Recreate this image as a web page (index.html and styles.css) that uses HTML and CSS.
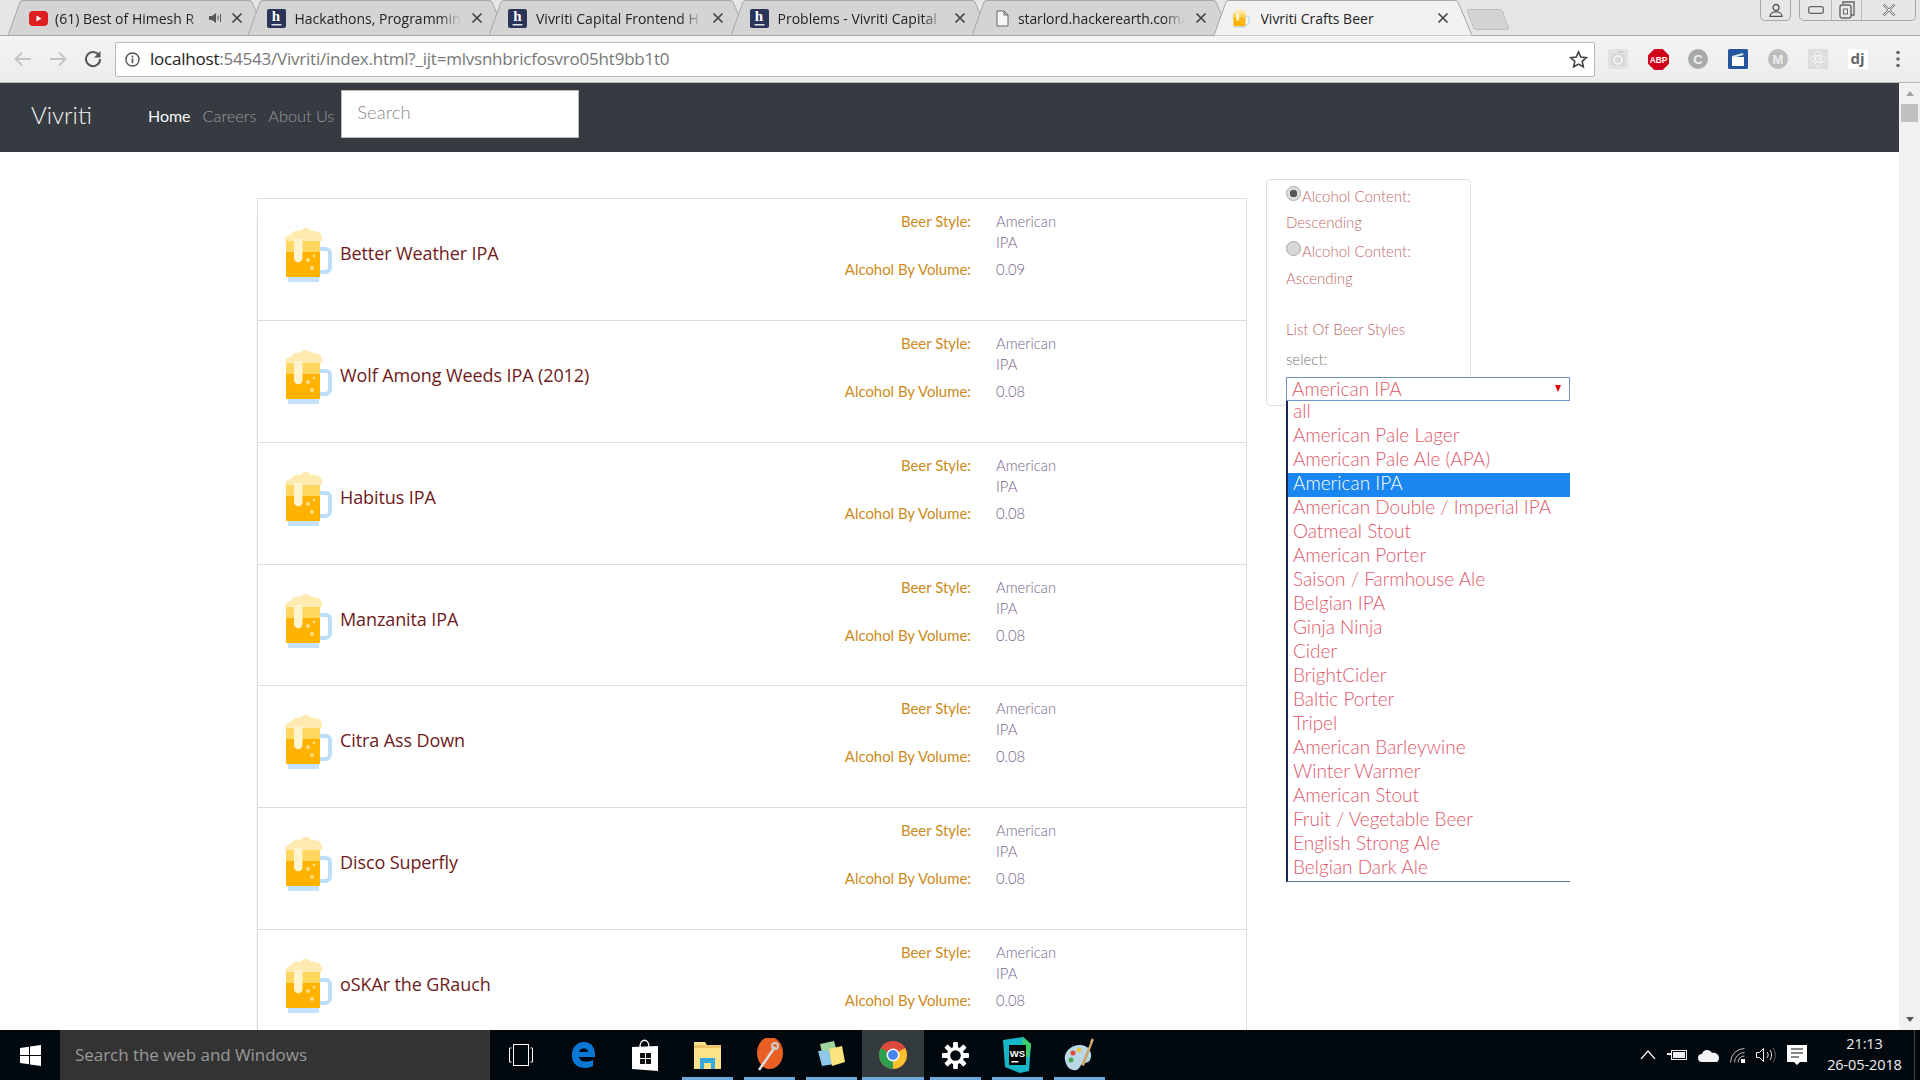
FILE: index.html
```html
<!DOCTYPE html>
<html lang="en">
<head>
<meta charset="utf-8">
<title>Vivriti Crafts Beer</title>
<link rel="stylesheet" href="styles.css">
</head>
<body>
<svg class="defs" width="0" height="0">
  <symbol id="beer" viewBox="0 0 48 54">
    <path d="M35 19h6a6 6 0 0 1 6 6v14a7 7 0 0 1-7 7h-5v-4h5a3 3 0 0 0 3-3V25a2 2 0 0 0-2-2h-6z" fill="#bbdefb"/>
    <rect x="3" y="48" width="31" height="6" fill="#c4e2fb"/>
    <rect x="1" y="13" width="34" height="36" fill="#ffb300"/>
    <rect x="1" y="13" width="34" height="11" fill="#ffd75e"/>
    <path d="M0 13c0-4 3-6 6-6 1-4 6-5 9-4 3-4 9-4 11 0 5-1 11 2 11 6v4H0z" fill="#ffeab0"/>
    <path d="M9 11h8.500v19a4.250 4.250 0 0 1-8.500 0z" fill="#fff3d0"/>
    <circle cx="23" cy="32" r="2" fill="#ffe08a"/><circle cx="29" cy="28" r="1.400" fill="#ffe08a"/><circle cx="27" cy="40" r="2" fill="#ffe08a"/>
  </symbol>
  <symbol id="tabshape" viewBox="0 0 258 36" preserveAspectRatio="none">
    <path d="M0 35.500 12 2q.6-1.500 3-1.500h226q2.400 0 3 1.500L258 35.500" vector-effect="non-scaling-stroke"/>
  </symbol>
  <symbol id="hfav" viewBox="0 0 19 19">
    <rect width="19" height="19" rx="2" fill="#2a3358"/>
    <path d="M4.500 15.800h10" stroke="#fff" stroke-width="1.300"/>
  </symbol>
</svg>

<header class="tabstrip">
  <div class="tabs">
    <div class="tab tab-first">
      <svg class="tab-bg"><use href="#tabshape"/></svg>
      <svg class="fav" viewBox="0 0 19 19"><rect y="2" width="19" height="15" rx="4" fill="#e02020"/><path d="M7.500 6.500l5 3-5 3z" fill="#fff"/></svg>
      <span class="tab-title tab-title-short">(61) Best of Himesh R</span>
      <svg class="speaker" viewBox="0 0 14 12"><path d="M0 4h3l4-3v10L3 8H0z" fill="#555"/><path d="M9 3.500v5M11.500 2v8" stroke="#555"/></svg>
      <svg class="close" viewBox="0 0 12 12"><path d="M1.500 1.500l9 9m0-9l-9 9" stroke="#444" stroke-width="1.700"/></svg>
    </div>
    <div class="tab">
      <svg class="tab-bg"><use href="#tabshape"/></svg>
      <span class="hbox"><svg class="hbox-bg"><use href="#hfav"/></svg><span class="hletter">h</span></span>
      <span class="tab-title">Hackathons, Programmin</span>
      <svg class="close" viewBox="0 0 12 12"><path d="M1.500 1.500l9 9m0-9l-9 9" stroke="#444" stroke-width="1.700"/></svg>
    </div>
    <div class="tab">
      <svg class="tab-bg"><use href="#tabshape"/></svg>
      <span class="hbox"><svg class="hbox-bg"><use href="#hfav"/></svg><span class="hletter">h</span></span>
      <span class="tab-title">Vivriti Capital Frontend H</span>
      <svg class="close" viewBox="0 0 12 12"><path d="M1.500 1.500l9 9m0-9l-9 9" stroke="#444" stroke-width="1.700"/></svg>
    </div>
    <div class="tab">
      <svg class="tab-bg"><use href="#tabshape"/></svg>
      <span class="hbox"><svg class="hbox-bg"><use href="#hfav"/></svg><span class="hletter">h</span></span>
      <span class="tab-title">Problems - Vivriti Capital</span>
      <svg class="close" viewBox="0 0 12 12"><path d="M1.500 1.500l9 9m0-9l-9 9" stroke="#444" stroke-width="1.700"/></svg>
    </div>
    <div class="tab">
      <svg class="tab-bg"><use href="#tabshape"/></svg>
      <svg class="fav fav-file" viewBox="0 0 13 17"><path d="M1 1h7l4 4v11H1zM8 1v4h4" fill="#f6f6f6" stroke="#666"/></svg>
      <span class="tab-title tab-title-file">starlord.hackerearth.com/</span>
      <svg class="close" viewBox="0 0 12 12"><path d="M1.500 1.500l9 9m0-9l-9 9" stroke="#444" stroke-width="1.700"/></svg>
    </div>
    <div class="tab tab-active">
      <svg class="tab-bg"><use href="#tabshape"/></svg>
      <svg class="fav fav-beer"><use href="#beer"/></svg>
      <span class="tab-title tab-title-active">Vivriti Crafts Beer</span>
      <svg class="close" viewBox="0 0 12 12"><path d="M1.500 1.500l9 9m0-9l-9 9" stroke="#444" stroke-width="1.700"/></svg>
    </div>
  </div>
  <div class="newtab"></div>
  <div class="winbtns">
    <div class="userbtn">
      <svg viewBox="0 0 14 14" width="14" height="14"><circle cx="7" cy="4.500" r="3" fill="none" stroke="#555" stroke-width="1.300"/><path d="M1 13.300c0-6 12-6 12 0z" fill="none" stroke="#555" stroke-width="1.300"/></svg>
    </div>
    <div class="wingroup">
      <div class="winbtn"><svg viewBox="0 0 16 8" width="16" height="8"><rect x=".7" y=".7" width="14.600" height="6.600" rx="2" fill="none" stroke="#666" stroke-width="1.300"/></svg></div>
      <div class="winbtn winbtn-mid"><svg viewBox="0 0 16 18" width="16" height="18"><path d="M4 3V1h11v13h-3" fill="none" stroke="#666" stroke-width="1.400"/><rect x="1" y="4" width="11" height="13" rx="2" fill="#e8e8e8" stroke="#666" stroke-width="1.400"/><rect x="4.500" y="8" width="4" height="5" fill="none" stroke="#666"/></svg></div>
      <div class="winbtn winbtn-x"><svg viewBox="0 0 14 14" width="14" height="14"><path d="M1.500 1.500l11 11m0-11l-11 11" stroke="#777" stroke-width="2.400"/><path d="M1.500 1.500l11 11m0-11l-11 11" stroke="#eee" stroke-width="1"/></svg></div>
    </div>
  </div>
</header>

<div class="toolbar">
  <div class="navarrows">
    <svg viewBox="0 0 18 16" width="18" height="16"><path d="M17 8H2m6-6.500L1.500 8 8 14.500" fill="none" stroke="#c4c4c4" stroke-width="1.800"/></svg>
    <svg viewBox="0 0 18 16" width="18" height="16"><path d="M1 8h15m-6-6.500L16.500 8 10 14.500" fill="none" stroke="#c4c4c4" stroke-width="1.800"/></svg>
    <svg viewBox="0 0 18 18" width="18" height="18"><path d="M15 5.500A7 7 0 1 0 16 9" fill="none" stroke="#555" stroke-width="2"/><path d="M16.500 1v6.500H10z" fill="#555"/></svg>
  </div>
  <div class="omnibox">
    <svg class="infoicon" viewBox="0 0 16 16" width="15" height="15"><circle cx="8" cy="8" r="7" fill="none" stroke="#555" stroke-width="1.500"/><path d="M8 7v5M8 4v1.800" stroke="#555" stroke-width="1.800"/></svg>
    <span class="url"><span class="url-host">localhost</span>:54543/Vivriti/index.html?_ijt=mlvsnhbricfosvro05ht9bb1t0</span>
    <svg class="star" viewBox="0 0 20 20" width="19" height="19"><path d="M10 2l2.400 5.400 5.800.6-4.300 3.900 1.200 5.800L10 14.800 4.900 17.700l1.200-5.800L1.800 8l5.800-.6z" fill="none" stroke="#444" stroke-width="1.700"/></svg>
  </div>
  <div class="extensions">
    <span class="ext"><svg viewBox="0 0 20 20" width="20" height="20"><rect width="20" height="20" rx="1" fill="#e2e2e2"/><rect x="3" y="5" width="14" height="12" fill="#d8d8d8"/><circle cx="10" cy="11" r="4" fill="none" stroke="#fafafa" stroke-width="1.500"/><rect x="10" y="2" width="5" height="2" fill="#cfcfcf"/></svg></span>
    <span class="ext"><svg viewBox="0 0 20 20" width="21" height="21"><path d="M6 0h8l6 6v8l-6 6H6l-6-6V6z" fill="#d0021b"/><text x="10" y="13.500" class="abp">ABP</text></svg></span>
    <span class="ext"><svg viewBox="0 0 20 20" width="20" height="20"><circle cx="10" cy="10" r="10" fill="#a9a9a9"/><text x="10" y="14.500" class="extletter">C</text></svg></span>
    <span class="ext"><svg viewBox="0 0 20 20" width="20" height="20"><rect width="20" height="20" rx="1.500" fill="#24579e"/><rect x="4" y="8" width="12" height="9" fill="#fff"/><path d="M4 7l11-3 .5 2-11 3z" fill="#dfe8f5"/></svg></span>
    <span class="ext"><svg viewBox="0 0 20 20" width="20" height="20"><circle cx="10" cy="10" r="10" fill="#bdbdbd"/><text x="10" y="14.500" class="extletter">M</text></svg></span>
    <span class="ext"><svg viewBox="0 0 20 20" width="20" height="20"><rect width="20" height="20" fill="#dedede"/><g fill="none" stroke="#f4f4f4"><ellipse cx="10" cy="10" rx="8" ry="3.500"/><ellipse cx="10" cy="10" rx="3.500" ry="8"/><circle cx="10" cy="10" r="2.500"/></g></svg></span>
    <span class="ext"><svg viewBox="0 0 20 20" width="20" height="20"><rect width="20" height="20" fill="#fff"/><text x="9.500" y="15" class="djtext">dj</text></svg></span>
    <span class="ext"><svg viewBox="0 0 4 18" width="4" height="18"><circle cx="2" cy="2.500" r="1.800" fill="#666"/><circle cx="2" cy="9" r="1.800" fill="#666"/><circle cx="2" cy="15.500" r="1.800" fill="#666"/></svg></span>
  </div>
</div>

<div class="viewport">
  <div class="page">
    <nav class="navbar">
      <a class="brand">Vivriti</a>
      <a class="navlink navlink-active">Home</a>
      <a class="navlink">Careers</a>
      <a class="navlink">About Us</a>
      <div class="searchbox">Search</div>
    </nav>
    <main class="content">
      <section class="beerlist">
        <article class="card">
          <svg class="mug"><use href="#beer"/></svg>
          <h2 class="beername">Better Weather IPA</h2>
          <dl class="facts">
            <dt>Beer Style:</dt><dd>American IPA</dd>
            <dt>Alcohol By Volume:</dt><dd>0.09</dd>
          </dl>
        </article>
        <article class="card">
          <svg class="mug"><use href="#beer"/></svg>
          <h2 class="beername">Wolf Among Weeds IPA (2012)</h2>
          <dl class="facts">
            <dt>Beer Style:</dt><dd>American IPA</dd>
            <dt>Alcohol By Volume:</dt><dd>0.08</dd>
          </dl>
        </article>
        <article class="card">
          <svg class="mug"><use href="#beer"/></svg>
          <h2 class="beername">Habitus IPA</h2>
          <dl class="facts">
            <dt>Beer Style:</dt><dd>American IPA</dd>
            <dt>Alcohol By Volume:</dt><dd>0.08</dd>
          </dl>
        </article>
        <article class="card">
          <svg class="mug"><use href="#beer"/></svg>
          <h2 class="beername">Manzanita IPA</h2>
          <dl class="facts">
            <dt>Beer Style:</dt><dd>American IPA</dd>
            <dt>Alcohol By Volume:</dt><dd>0.08</dd>
          </dl>
        </article>
        <article class="card">
          <svg class="mug"><use href="#beer"/></svg>
          <h2 class="beername">Citra Ass Down</h2>
          <dl class="facts">
            <dt>Beer Style:</dt><dd>American IPA</dd>
            <dt>Alcohol By Volume:</dt><dd>0.08</dd>
          </dl>
        </article>
        <article class="card">
          <svg class="mug"><use href="#beer"/></svg>
          <h2 class="beername">Disco Superfly</h2>
          <dl class="facts">
            <dt>Beer Style:</dt><dd>American IPA</dd>
            <dt>Alcohol By Volume:</dt><dd>0.08</dd>
          </dl>
        </article>
        <article class="card">
          <svg class="mug"><use href="#beer"/></svg>
          <h2 class="beername">oSKAr the GRauch</h2>
          <dl class="facts">
            <dt>Beer Style:</dt><dd>American IPA</dd>
            <dt>Alcohol By Volume:</dt><dd>0.08</dd>
          </dl>
        </article>
      </section>
      <aside class="filters">
        <div class="filterline"><input class="radio" type="radio" name="sort" checked>Alcohol Content:</div>
        <div class="filterline">Descending</div>
        <div class="filterline filterline-gap"><input class="radio" type="radio" name="sort">Alcohol Content:</div>
        <div class="filterline">Ascending</div>
        <div class="filterlabel">List Of Beer Styles</div>
        <div class="selectlabel">select:</div>
        <div class="selectwrap">
          <div class="selectbox"><span>American IPA</span><span class="selectarrow"></span></div>
          <ul class="dropdown">
            <li>all</li>
            <li>American Pale Lager</li>
            <li>American Pale Ale (APA)</li>
            <li class="selected">American IPA</li>
            <li>American Double / Imperial IPA</li>
            <li>Oatmeal Stout</li>
            <li>American Porter</li>
            <li>Saison / Farmhouse Ale</li>
            <li>Belgian IPA</li>
            <li>Ginja Ninja</li>
            <li>Cider</li>
            <li>BrightCider</li>
            <li>Baltic Porter</li>
            <li>Tripel</li>
            <li>American Barleywine</li>
            <li>Winter Warmer</li>
            <li>American Stout</li>
            <li>Fruit / Vegetable Beer</li>
            <li>English Strong Ale</li>
            <li>Belgian Dark Ale</li>
          </ul>
        </div>
      </aside>
    </main>
  </div>
  <div class="scrollbar">
    <span class="arrow-up"></span>
    <span class="thumb"></span>
    <span class="arrow-down"></span>
  </div>
</div>

<footer class="taskbar">
  <div class="startbtn">
    <svg viewBox="0 0 21 21" width="21" height="21"><path d="M0 3l9-1.300V10H0zM10 1.500L21 0v10H10zM0 11h9v8.300L0 18zM10 11h11v10l-11-1.500z" fill="#fff"/></svg>
  </div>
  <div class="winsearch">Search the web and Windows</div>
  <div class="taskicon taskicon-view">
    <svg viewBox="0 0 24 22" width="24" height="22"><rect x="4.500" y=".5" width="15" height="21" fill="none" stroke="#fff"/><path d="M2.500 4H.5v14h2M21.500 4h2v14h-2" fill="none" stroke="#fff"/></svg>
  </div>
  <div class="taskicon">
    <svg viewBox="0 0 26 28" width="26" height="28"><path d="M2 16C1 7 7 0 15 1c7 .8 10 6 10 13v2H9c.5 5 8 6 14 3v6c-8 4-20 2-21-9zM9 11h9c0-5-8-5-9 0z" fill="#0a78d4"/></svg>
  </div>
  <div class="taskicon">
    <svg viewBox="0 0 26 32" width="26" height="32"><path d="M8 8c0-9 9-9 9 0" fill="none" stroke="#fff" stroke-width="1.300"/><path d="M0 8l26-1v25L0 30z" fill="#fff"/><path d="M8 14h5v5H8zM14 14h5v5h-5zM8 20h5v5H8zM14 20h5v5h-5z" fill="#111"/></svg>
  </div>
  <div class="taskicon taskicon-on">
    <svg viewBox="0 0 27 28" width="27" height="28"><path d="M0 1h11l2 3h14v24H0z" fill="#fce38a"/><path d="M0 4h27v3H0z" fill="#e9c46a"/><path d="M6 17h15v11H6z" fill="#38a9de"/><path d="M10 22h7v6h-7z" fill="#fce38a"/></svg>
  </div>
  <div class="taskicon taskicon-on">
    <svg viewBox="0 0 28 34" width="28" height="34"><ellipse cx="15" cy="15" rx="13" ry="16" fill="#ea5f24"/><path d="M4 32l16-23" stroke="#ddd" stroke-width="2.500"/><circle cx="20" cy="8" r="3" fill="none" stroke="#ccc" stroke-width="2"/></svg>
  </div>
  <div class="taskicon taskicon-on">
    <svg viewBox="0 0 28 28" width="28" height="28"><path d="M3 3l14-3 4 14-14 6z" fill="#9fd69b"/><path d="M1 10l13-1 3 14-12 2z" fill="#8fc7e8"/><path d="M12 8l13-3 3 16-13 4z" fill="#fde37c"/></svg>
  </div>
  <div class="taskicon taskicon-on taskicon-active">
    <svg viewBox="0 0 28 28" width="28" height="28"><circle cx="14" cy="14" r="14" fill="#dd4b3e"/><path d="M14 14L26.100 7A14 14 0 0 1 14 28z" fill="#fbc02d"/><path d="M14 14L14 28A14 14 0 0 1 1.900 7z" fill="#2e9e4f"/><circle cx="14" cy="14" r="6.500" fill="#fff"/><circle cx="14" cy="14" r="5" fill="#4a84ee"/></svg>
  </div>
  <div class="taskicon taskicon-on">
    <svg viewBox="0 0 28 28" width="27" height="27"><g fill="#fff"><circle cx="14" cy="14" r="9"/><rect x="11.500" y="0" width="5" height="28" rx="1"/><rect x="0" y="11.500" width="28" height="5" rx="1"/><rect x="11.500" y="0" width="5" height="28" rx="1" transform="rotate(45 14 14)"/><rect x="11.500" y="0" width="5" height="28" rx="1" transform="rotate(-45 14 14)"/></g><circle cx="14" cy="14" r="5.500" fill="#02090e"/></svg>
  </div>
  <div class="taskicon taskicon-on">
    <svg viewBox="0 0 30 36" width="30" height="36"><path d="M1 3l20-3 8 7-2 27-9 2-15-6z" fill="#17b5c8"/><path d="M21 0l8 7-2 14-8-4z" fill="#3bd06a"/><rect x="7" y="8" width="17" height="20" fill="#000"/><text x="15.500" y="20" class="wstext">WS</text><rect x="9.500" y="24" width="7" height="1.500" fill="#fff"/></svg>
  </div>
  <div class="taskicon taskicon-on">
    <svg viewBox="0 0 30 34" width="30" height="34"><path d="M1 22c-2-9 8-16 16-15 9 1 12 9 9 15-2 4-7 2-9 5-2 4-4 6-8 5-5-1-7-5-8-10z" fill="#b9d8e8"/><circle cx="9" cy="15" r="2.500" fill="#e04a3a"/><circle cx="15" cy="12" r="2.300" fill="#f2c230"/><circle cx="7" cy="22" r="2.500" fill="#49a64e"/><path d="M17 27L27 3l2 1-9 24z" fill="#c9a36a"/><path d="M26 4l2-4 2 2-2 3z" fill="#e0b070"/></svg>
  </div>
  <div class="tray">
    <svg viewBox="0 0 16 10" width="16" height="10"><path d="M1 9l7-8 7 8" fill="none" stroke="#eee" stroke-width="1.300"/></svg>
    <svg viewBox="0 0 20 12" width="20" height="12"><rect x="4.500" y="1.500" width="15" height="9" fill="none" stroke="#eee"/><rect x="6" y="3" width="12" height="6" fill="#eee"/><path d="M0 5h4" stroke="#eee" stroke-width="2"/></svg>
    <svg viewBox="0 0 21 13" width="21" height="13"><path d="M4 13a4 4 0 0 1 0-8c1-4 7-6 10-1 4-1 7 2 7 5 0 2-1 4-3 4z" fill="#f4f4f4"/></svg>
    <svg viewBox="0 0 15 15" width="15" height="15"><path d="M.5 14.500a14 14 0 0 1 14-14M4.500 14.500a10 10 0 0 1 10-10M8 14.500a6.500 6.500 0 0 1 6.500-6.500" fill="none" stroke="#bbb"/><rect x="11" y="11" width="4" height="4" fill="#fff"/></svg>
    <svg viewBox="0 0 20 16" width="20" height="16"><path d="M.5 5.500h3l4-4v13l-4-4h-3z" fill="none" stroke="#eee"/><path d="M11 5c1.500 2 1.500 4 0 6M14 3c2 3 2 7 0 10" fill="none" stroke="#eee"/><path d="M17 1c3 4 3 10 0 14" fill="none" stroke="#666"/></svg>
    <svg viewBox="0 0 20 20" width="20" height="20"><path d="M0 0h20v17h-7l-3 3-3-3H0z" fill="#fff"/><path d="M4 4h12M4 8h12M4 12h8" stroke="#111" stroke-width="1.200"/></svg>
    <div class="clock"><div>21:13</div><div>26-05-2018</div></div>
  </div>
</footer>
</body>
</html>
```

FILE: styles.css
```css
* { box-sizing: border-box; }
html, body { margin: 0; height: 100%; }
body {
  width: 1920px;
  height: 1080px;
  overflow: hidden;
  display: flex;
  flex-direction: column;
  font-family: Lato, "Liberation Sans", sans-serif;
  background: #fff;
}
.defs { position: absolute; }

/* tab strip */
.tabstrip {
  height: 35px;
  flex: none;
  display: flex;
  background: #e6e6e6;
  position: relative;
}
.tabs { display: flex; padding-left: 8px; flex: none; }
.tab {
  position: relative;
  flex: none;
  width: 258px;
  height: 36px;
  margin-right: -16.500px;
  padding: 0 23px 0 19px;
  display: flex;
  align-items: center;
  font-family: "Open Sans", sans-serif;
  font-size: 14px;
  color: #222;
}
.tab-first { margin-right: -18.500px; padding-left: 21px; }
.tab-active { z-index: 2; }
.tab-bg { position: absolute; inset: 0; width: 100%; height: 100%; fill: #d4d4d4; stroke: #a8a8a8; stroke-width: 1; }
.tab-active .tab-bg { fill: #f2f2f2; }
.fav { width: 19px; height: 19px; flex: none; position: relative; }
.fav-file { width: 13px; height: 17px; margin: 0 9px 0 5px; }
.fav-beer { width: 17px; height: 19px; }
.hbox { position: relative; flex: none; width: 19px; height: 19px; }
.hbox-bg { position: absolute; inset: 0; width: 19px; height: 19px; }
.hletter {
  position: absolute;
  inset: -2px 0 0 0;
  text-align: center;
  color: #fff;
  font: 700 15px/19px "Liberation Serif", serif;
}
.tab-title {
  position: relative;
  flex: 1;
  min-width: 0;
  margin-left: 9px;
  white-space: nowrap;
  overflow: hidden;
  -webkit-mask-image: linear-gradient(90deg, #000 86%, transparent 99%);
  mask-image: linear-gradient(90deg, #000 86%, transparent 99%);
}
.tab-title-short { margin-left: 7px; }
.tab-title-file { margin-left: 0; letter-spacing: -.12px; }
.tab-title-active { margin-left: 11px; -webkit-mask-image: none; mask-image: none; }
.speaker { position: relative; width: 14px; height: 12px; flex: none; }
.close { position: relative; width: 12px; height: 12px; flex: none; margin-left: 8px; }
.newtab {
  width: 36px;
  height: 21px;
  margin: 9px 0 0 15px;
  background: #d4d4d4;
  border: 1px solid #bdbdbd;
  border-radius: 3px;
  transform: skewX(20deg);
  flex: none;
}
.winbtns { margin-left: auto; display: flex; gap: 8px; padding-right: 4px; align-items: flex-start; }
.userbtn, .wingroup {
  height: 21px;
  border: 1px solid #a8a8a8;
  border-top: 0;
  border-radius: 0 0 5px 5px;
  display: flex;
  align-items: center;
  justify-content: center;
}
.userbtn { width: 31px; }
.winbtn { width: 31px; height: 100%; display: flex; align-items: center; justify-content: center; }
.winbtn-mid { border-left: 1px solid #b8b8b8; border-right: 1px solid #b8b8b8; }
.winbtn-x { width: 53px; }

/* toolbar */
.toolbar {
  height: 48px;
  flex: none;
  display: flex;
  align-items: center;
  background: linear-gradient(#f4f4f4, #ececec);
  border-top: 1px solid #a8a8a8;
  border-bottom: 1px solid #b5b5b5;
  position: relative;
  z-index: 1;
}
.navarrows { width: 115px; display: flex; gap: 17px; padding-left: 14px; align-items: center; flex: none; }
.omnibox {
  width: 1480px;
  height: 35px;
  flex: none;
  background: #fff;
  border: 1px solid #b8b8b8;
  border-radius: 2px;
  display: flex;
  align-items: center;
  padding: 0 6px 0 9px;
}
.url {
  margin-left: 10px;
  padding-bottom: 2px;
  font-family: "Open Sans", sans-serif;
  font-size: 17px;
  letter-spacing: -.22px;
  color: #777;
  white-space: nowrap;
  flex: 1;
}
.url-host { color: #222; }
.extensions { flex: 1; display: flex; align-items: center; padding-left: 3px; }
.ext { width: 40px; flex: none; display: flex; justify-content: center; align-items: center; }
.abp { font: 700 8px "Liberation Sans", sans-serif; fill: #fff; text-anchor: middle; }
.extletter { font: 700 13px "Liberation Sans", sans-serif; fill: #eee; text-anchor: middle; }
.djtext { font: 700 15px "Open Sans", sans-serif; fill: #666; text-anchor: middle; }

/* viewport */
.viewport { flex: 1; min-height: 0; display: flex; }
.page { flex: 1; min-width: 0; display: flex; flex-direction: column; }
.scrollbar {
  width: 21px;
  flex: none;
  background: #f1f1f1;
  display: flex;
  flex-direction: column;
  align-items: center;
  padding: 8px 0 8px;
}
.arrow-up, .arrow-down { width: 0; height: 0; border-left: 4.500px solid transparent; border-right: 4.500px solid transparent; }
.arrow-up { border-bottom: 5px solid #a3a3a3; }
.arrow-down { border-top: 5px solid #555; margin-top: auto; }
.thumb { width: 17px; height: 18px; margin-top: 8px; background: #c1c1c1; }

/* nav */
.navbar {
  height: 69px;
  flex: none;
  background: #363a41;
  display: flex;
  align-items: center;
  padding-left: 31px;
}
.brand { color: #f4f4f4; font-size: 24px; font-weight: 300; margin-right: 56px; position: relative; top: -3px; }
.navlink { font-size: 16.300px; font-weight: 300; color: #9a9c9f; margin-right: 12px; position: relative; top: -2px; }
.navlink-active { color: #f8f8f8; font-size: 16px; font-weight: 400; }
.searchbox {
  width: 238px;
  height: 48px;
  margin-left: -5px;
  margin-top: -7px;
  padding: 10px 15px 0;
  background: #fff;
  border: 1px solid #bbb;
  font-size: 18.500px;
  font-weight: 300;
  color: #8a8a8a;
}

/* content */
.content { flex: 1; min-height: 0; display: flex; padding: 27px 0 0 257px; overflow: hidden; position: relative; }
.beerlist {
  width: 990px;
  flex: none;
  margin-top: 19px;
  align-self: flex-start;
  border: 1px solid #dcdcdc;
  border-bottom: 0;
  box-shadow: -20px 0 0 -19px #f6f6f6;
}
.card {
  height: 121.850px;
  border-bottom: 1px solid #dcdcdc;
  display: flex;
  align-items: flex-start;
  position: relative;
}
.mug { width: 48px; height: 54px; margin: 29px 0 0 27px; flex: none; }
.beername {
  margin: 42px 0 0 7px;
  width: 495px;
  font: 400 18px/24px "Open Sans", sans-serif;
  color: #6e1a20;
  letter-spacing: -.1px;
  flex: none;
}
.facts {
  margin: 12px 0 0 0;
  display: grid;
  grid-template-columns: 136px 70px;
  column-gap: 25px;
  row-gap: 6px;
  font-size: 14.900px;
  line-height: 21px;
}
.facts dt { text-align: right; color: #cc8a20; white-space: nowrap; }
.facts dd { margin: 0; font-size: 14.800px; font-weight: 300; color: #75668a; }

/* sidebar */
.filters {
  position: relative;
  width: 205px;
  height: 227px;
  flex: none;
  margin-left: 19px;
  padding: 2.500px 19px 0;
  border: 1px solid #dedede;
  border-radius: 4px;
  font-size: 15px;
  font-weight: 300;
  color: #bd6a68;
}
.filterline { line-height: 26.500px; height: 26.500px; white-space: nowrap; }
.filterline-gap { margin-top: 2.500px; }
.radio {
  appearance: none;
  width: 15px;
  height: 15px;
  margin: 0 1px 0 0;
  border-radius: 50%;
  border: 1px solid #a8a8a8;
  background: #d8d8d8;
  vertical-align: 1px;
}
.radio:checked { background: radial-gradient(circle, #555 0 3.500px, #dcdcdc 4px); }
.filterlabel { margin-top: 25px; line-height: 26px; }
.selectlabel { margin-top: 4px; line-height: 26px; color: #777; }
.selectwrap { position: absolute; left: 19px; top: 197px; width: 284px; z-index: 3; }
.selectbox {
  height: 24px;
  border: 1px solid #6b93c8;
  padding: 0 5px 2px;
  background: #fff;
  display: flex;
  align-items: center;
  justify-content: space-between;
  font-size: 19px;
  color: #dd5a66;
}
.selectarrow {
  width: 0;
  height: 0;
  margin-right: 3px;
  border-left: 3.500px solid transparent;
  border-right: 3.500px solid transparent;
  border-top: 7px solid #e60000;
}
.dropdown {
  margin: 0;
  padding: 0;
  list-style: none;
  background: #fff;
  border-left: 2px solid #1a2550;
  border-bottom: 1px solid #5b7795;
  font-size: 19px;
  color: #e0596b;
}
.dropdown li { height: 24px; line-height: 19px; padding-left: 5px; }
.dropdown .selected { background: #1a86f0; color: #fff; }

/* taskbar */
.taskbar {
  height: 50px;
  flex: none;
  background: #02090e;
  display: flex;
  align-items: stretch;
  color: #fff;
}
.startbtn { width: 60px; display: flex; align-items: center; justify-content: center; }
.winsearch {
  width: 430px;
  background: #333;
  color: #999;
  padding-left: 15px;
  font-family: "Open Sans", sans-serif;
  font-size: 17px;
  letter-spacing: -.05px;
  line-height: 50px;
}
.taskicon {
  width: 62px;
  display: flex;
  align-items: center;
  justify-content: center;
  position: relative;
  flex: none;
}
.taskicon-view { width: 66px; margin-right: -4px; padding-right: 5px; }
.taskicon-on::after {
  content: "";
  position: absolute;
  left: 6px;
  right: 5px;
  bottom: 0;
  height: 3px;
  background: #6fa8dc;
}
.taskicon-active { background: #333b3f; }
.taskicon-active::after { left: 0; right: 0; }
.tray { margin-left: auto; display: flex; align-items: center; gap: 11px; padding-right: 5px; }
.clock { width: 92px; margin-left: 5px; text-align: center; font-family: "Open Sans", sans-serif; font-size: 14.500px; line-height: 21px; color: #eee; letter-spacing: -.1px; border-right: 1px solid #444; height: 50px; padding-top: 3px; padding-right: 8px; }
.wstext { font: 700 9.500px "Liberation Sans", sans-serif; fill: #fff; text-anchor: middle; }
```
